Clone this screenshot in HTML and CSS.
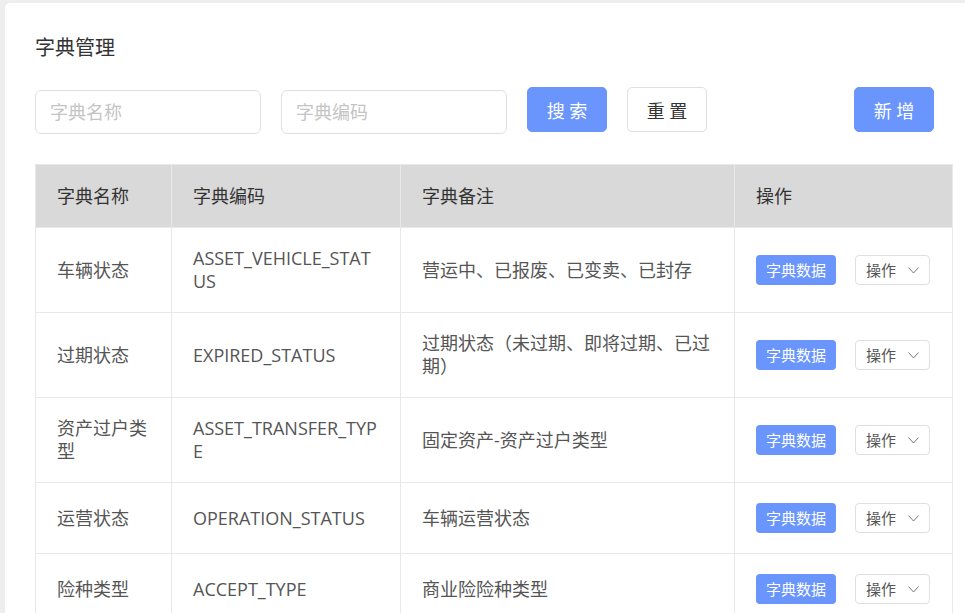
FILE: index.html
```html
<!DOCTYPE html>
<html lang="zh-CN">
<head>
<meta charset="utf-8">
<title>字典管理</title>
<link rel="stylesheet" href="styles.css">
</head>
<body>
<div class="card">
  <h1 class="title">字典管理</h1>
  <div class="toolbar">
    <input class="field" type="text" placeholder="字典名称">
    <input class="field" type="text" placeholder="字典编码">
    <button class="btn btn-primary">搜 索</button>
    <button class="btn btn-default">重 置</button>
    <button class="btn btn-primary btn-add">新 增</button>
  </div>
  <table class="grid">
    <colgroup>
      <col class="c1"><col class="c2"><col class="c3"><col class="c4">
    </colgroup>
    <thead>
      <tr><th>字典名称</th><th>字典编码</th><th>字典备注</th><th>操作</th></tr>
    </thead>
    <tbody>
      <tr>
        <td>车辆状态</td><td class="code">ASSET_VEHICLE_STATUS</td><td>营运中、已报废、已变卖、已封存</td>
        <td class="ops"><div class="ops-inner"><span class="tag-btn">字典数据</span><span class="drop">操作<svg width="11" height="7" viewBox="0 0 11 7"><polyline points="0.5,0.5 5.5,6 10.5,0.5" fill="none" stroke="#777" stroke-width="1"/></svg></span></div></td>
      </tr>
      <tr>
        <td>过期状态</td><td class="code">EXPIRED_STATUS</td><td>过期状态（未过期、即将过期、已过期）</td>
        <td class="ops"><div class="ops-inner"><span class="tag-btn">字典数据</span><span class="drop">操作<svg width="11" height="7" viewBox="0 0 11 7"><polyline points="0.5,0.5 5.5,6 10.5,0.5" fill="none" stroke="#777" stroke-width="1"/></svg></span></div></td>
      </tr>
      <tr>
        <td>资产过户类型</td><td class="code">ASSET_TRANSFER_TYPE</td><td>固定资产-资产过户类型</td>
        <td class="ops"><div class="ops-inner"><span class="tag-btn">字典数据</span><span class="drop">操作<svg width="11" height="7" viewBox="0 0 11 7"><polyline points="0.5,0.5 5.5,6 10.5,0.5" fill="none" stroke="#777" stroke-width="1"/></svg></span></div></td>
      </tr>
      <tr>
        <td>运营状态</td><td class="code">OPERATION_STATUS</td><td>车辆运营状态</td>
        <td class="ops"><div class="ops-inner"><span class="tag-btn">字典数据</span><span class="drop">操作<svg width="11" height="7" viewBox="0 0 11 7"><polyline points="0.5,0.5 5.5,6 10.5,0.5" fill="none" stroke="#777" stroke-width="1"/></svg></span></div></td>
      </tr>
      <tr>
        <td>险种类型</td><td class="code">ACCEPT_TYPE</td><td>商业险险种类型</td>
        <td class="ops"><div class="ops-inner"><span class="tag-btn">字典数据</span><span class="drop">操作<svg width="11" height="7" viewBox="0 0 11 7"><polyline points="0.5,0.5 5.5,6 10.5,0.5" fill="none" stroke="#777" stroke-width="1"/></svg></span></div></td>
      </tr>
    </tbody>
  </table>
</div>
</body>
</html>
```
FILE: styles.css
```css
html, body {
  margin: 0;
  padding: 0;
  background: #eeeeee;
  overflow: hidden;
}
body {
  font-family: "Open Sans", "Noto Sans CJK SC", sans-serif;
  color: #555;
}
.card {
  margin: 3px 0 0 5px;
  background: #fff;
  border-radius: 5px 0 0 0;
  padding: 31px 0 40px 30px;
  min-height: 700px;
}
.title {
  margin: 0;
  font-size: 20px;
  font-weight: normal;
  line-height: 28px;
  color: #333;
}
.toolbar {
  display: flex;
  align-items: flex-start;
  gap: 20px;
  width: 899px;
  margin-top: 25px;
}
.field {
  box-sizing: border-box;
  width: 226px;
  height: 44px;
  margin-top: 3px;
  border: 1px solid #dcdfe6;
  border-radius: 6px;
  padding: 0 14px;
  font-family: inherit;
  font-size: 18px;
  color: #555;
  outline: none;
}
.field::placeholder {
  color: #c4c4c4;
}
.btn {
  box-sizing: border-box;
  width: 80px;
  height: 45px;
  border-radius: 5px;
  font-family: inherit;
  font-size: 18px;
  padding: 0;
  cursor: pointer;
}
.btn-primary {
  background: #6995fd;
  border: 1px solid #6995fd;
  color: #fff;
}
.btn-default {
  background: #fff;
  border: 1px solid #dcdfe6;
  color: #333;
}
.btn-add {
  margin-left: auto;
}
.grid {
  margin-top: 30px;
  border-collapse: collapse;
  table-layout: fixed;
  width: 917px;
  border: 1px solid #e8e8e8;
  font-size: 18px;
}
.c1 { width: 136px; }
.c2 { width: 229px; }
.c3 { width: 334px; }
.c4 { width: 218px; }
.grid th, .grid td {
  border: 1px solid #e8e8e8;
  text-align: left;
  vertical-align: middle;
  line-height: 23px;
  padding: 19px 18px 19px 21px;
  word-break: break-all;
}
.grid th {
  background: #d9d9d9;
  font-weight: normal;
  color: #333;
  height: 63px;
  padding-top: 0;
  padding-bottom: 0;
  box-sizing: border-box;
}
.grid td {
  color: #555;
}
.ops-inner {
  display: flex;
  align-items: center;
  height: 32px;
}
.tag-btn {
  box-sizing: border-box;
  width: 80px;
  height: 30px;
  line-height: 30px;
  border-radius: 4px;
  background: #6995fd;
  color: #fff;
  font-size: 15px;
  text-align: center;
}
.drop {
  box-sizing: border-box;
  display: inline-flex;
  align-items: center;
  width: 75px;
  height: 30px;
  margin-left: 19px;
  padding-left: 10px;
  border: 1px solid #dcdfe6;
  border-radius: 4px;
  background: #fff;
  color: #555;
  font-size: 15px;
}
.drop svg {
  margin-left: 12px;
}
```
